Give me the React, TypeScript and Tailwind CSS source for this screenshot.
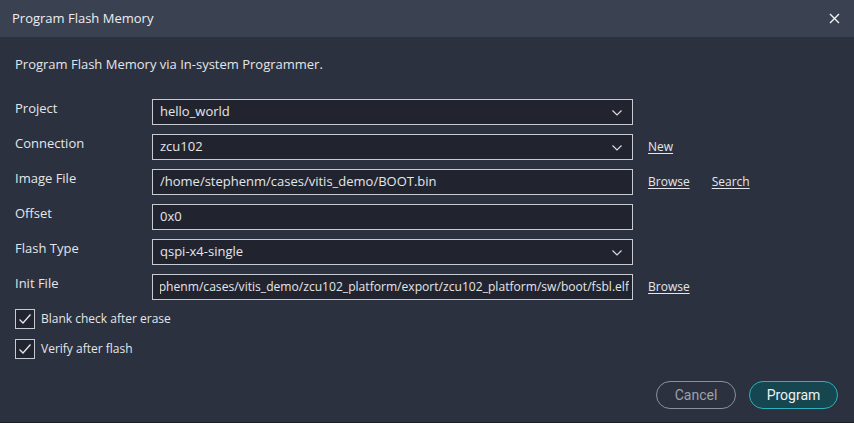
import React from "react";

const Chevron = () => (
  <svg width="12" height="8" viewBox="0 0 12 8" className="absolute right-[9px] top-[9px]">
    <path d="M1.5 1.5 L6 6 L10.5 1.5" fill="none" stroke="#d8dbe0" strokeWidth="1.2" />
  </svg>
);

const Check = () => (
  <div className="w-5 h-5 border border-[#c6cad2] bg-[#21252f] flex items-center justify-center">
    <svg width="14" height="12" viewBox="0 0 14 12">
      <path d="M1.5 6.5 L5 10 L12.5 1.5" fill="none" stroke="#e6e8ec" strokeWidth="1.3" />
    </svg>
  </div>
);

function Field({ value, select, end, small }: { value: string; select?: boolean; end?: boolean; small?: boolean }) {
  return (
    <div className="relative w-[481px] h-[26px] border border-[#c6cad2] bg-[#21242f] overflow-hidden shrink-0">
      <div
        className={`absolute inset-y-0 left-[7px] right-[3px] flex items-center text-[#e4e6ea] whitespace-nowrap overflow-hidden ${
          end ? "justify-end left-[2px]" : ""
        } ${small ? "text-[12.1px]" : "text-[13px]"}`}
      >
        {value}
      </div>
      {select && <Chevron />}
    </div>
  );
}

function Row({ label, children }: { label: string; children: React.ReactNode }) {
  return (
    <div className="flex h-[26px]">
      <div className="w-[137px] text-[13px] text-[#e4e6ea] leading-none pt-[3px]">{label}</div>
      <div className="flex items-center">{children}</div>
    </div>
  );
}

const Link = ({ children, className = "" }: { children: React.ReactNode; className?: string }) => (
  <span className={`text-[12px] text-[#e4e6ea] underline underline-offset-[2px] ${className}`}>{children}</span>
);

export default function App() {
  return (
    <div
      className="w-[854px] h-[423px] bg-[#2b313e] flex flex-col overflow-hidden"
      style={{ fontFamily: '"Open Sans", sans-serif' }}
    >
      <div className="h-[37px] bg-[#3a4151] flex items-center justify-between pl-[12px] pr-[14px] shrink-0">
        <span className="text-[13px] text-[#eceef1]">Program Flash Memory</span>
        <svg width="11" height="11" viewBox="0 0 11 11">
          <path d="M1 1 L10 10 M10 1 L1 10" stroke="#f2f3f5" strokeWidth="1.4" />
        </svg>
      </div>
      <div className="flex-1 flex flex-col pl-[15px] pr-[16px]">
        <div className="text-[13px] text-[#e4e6ea] mt-[18px] h-[18px] leading-[18px]">
          Program Flash Memory via In-system Programmer.
        </div>
        <div className="flex flex-col gap-[9px] mt-[26px]">
          <Row label="Project">
            <Field value="hello_world" select />
          </Row>
          <Row label="Connection">
            <Field value="zcu102" select />
            <Link className="ml-[15px]">New</Link>
          </Row>
          <Row label="Image File">
            <Field value="/home/stephenm/cases/vitis_demo/BOOT.bin" />
            <Link className="ml-[15px]">Browse</Link>
            <Link className="ml-[22px]">Search</Link>
          </Row>
          <Row label="Offset">
            <Field value="0x0" />
          </Row>
          <Row label="Flash Type">
            <Field value="qspi-x4-single" select />
          </Row>
          <Row label="Init File">
            <Field
              value="/home/stephenm/cases/vitis_demo/zcu102_platform/export/zcu102_platform/sw/boot/fsbl.elf"
              end
              small
            />
            <Link className="ml-[15px]">Browse</Link>
          </Row>
        </div>
        <div className="flex flex-col gap-[10px] mt-[9px]">
          <div className="flex items-center gap-[6px]">
            <Check />
            <span className="text-[12px] text-[#e4e6ea]">Blank check after erase</span>
          </div>
          <div className="flex items-center gap-[6px]">
            <Check />
            <span className="text-[12px] text-[#e4e6ea]">Verify after flash</span>
          </div>
        </div>
        <div className="flex justify-end gap-[13px] mt-[22px]" style={{ fontFamily: "Roboto, sans-serif" }}>
          <div className="w-[80px] h-[28px] rounded-full border border-[#8c9099] text-[#9ea2aa] text-[14px] flex items-center justify-center">
            Cancel
          </div>
          <div className="w-[89px] h-[28px] rounded-full border border-[#2bb3bd] bg-[#16464f] text-[#eef0f2] text-[14px] flex items-center justify-center">
            Program
          </div>
        </div>
      </div>
      <div className="h-[1px] bg-[#1a1d23] shrink-0" />
    </div>
  );
}
